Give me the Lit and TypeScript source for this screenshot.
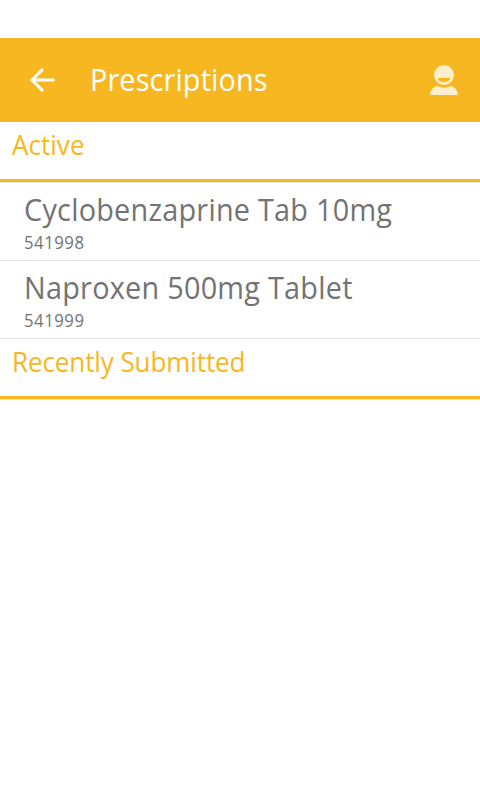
import { LitElement, html, css } from "lit";
import { customElement } from "lit/decorators.js";

interface Prescription { name: string; rx: string; width: number; }
const active: Prescription[] = [
  { name: "Cyclobenzaprine Tab 10mg", rx: "541998", width: 368 },
  { name: "Naproxen 500mg Tablet", rx: "541999", width: 328.5 },
];

// Horizontal condensing of the glyphs; tracking fills the remaining width.
const CONDENSE = 0.93;

@customElement("app-root")
export class AppRoot extends LitElement {
  static styles = css`
    :host { display: flex; flex-direction: column; height: 100vh; overflow: hidden; background: #fff; font-family: "Open Sans", "Noto Sans", sans-serif; }
    .status { height: 38px; flex: none; }
    .bar { height: 84px; flex: none; display: flex; align-items: center; background: #f7b720; color: #fff; padding: 0 20px 0 26px; box-sizing: border-box; }
    .back { width: 32px; height: 32px; margin-right: 32px; flex: none; }
    .title { flex: 1; display: flex; }
    .user { width: 32px; height: 34px; flex: none; }
    .section { flex: none; box-sizing: border-box; border-bottom: 3px solid #f7b720; color: #f7b720; padding: 3px 12px 0; height: 60px; }
    .list { border-top: 1px solid #e2e2e2; flex: none; }
    .row { height: 78px; box-sizing: border-box; border-bottom: 1px solid #e2e2e2; padding: 6px 24px 0; color: #737373; }
    .label { display: block; overflow: visible; }
    .label text { font-family: "Open Sans", "Noto Sans", sans-serif; font-kerning: none; fill: currentColor; }
  `;
  label(text: string, size: number, width: number, height: number, baseline: number) {
    return html`<svg class="label" width=${width} height=${height}><text transform="scale(${CONDENSE} 1)" x="0" y=${baseline} font-size=${size} textLength=${width / CONDENSE} lengthAdjust="spacing">${text}</text></svg>`;
  }
  render() {
    return html`
      <div class="status"></div>
      <header class="bar">
        <svg class="back" viewBox="0 0 32 32" fill="none" stroke="#fff" stroke-width="3"><path d="M28.500 16H6M17 5L6 16L17 27"/></svg>
        <div class="title">${this.label("Prescriptions", 31, 177.5, 42, 32)}</div>
        <svg class="user" viewBox="0 0 32 34" fill="#fdefcd">
          <path fill-rule="evenodd" d="M16 2A10 10 0 1 1 16 22A10 10 0 1 1 16 2ZM9.600 15C10.800 20.700 21.200 20.700 22.400 15Z"/>
          <path d="M2 32C2.500 27.500 5 24 9.300 23C13 25.300 19 25.300 22.700 23C27 24 29.500 27.500 30 32Z"/>
        </svg>
      </header>
      <div class="section">${this.label("Active", 28, 72.5, 38, 30)}</div>
      <div class="list">
        ${active.map((p) => html`<div class="row">${this.label(p.name, 31, p.width, 40, 32)}${this.label(p.rx, 18, 60, 24, 20)}</div>`)}
      </div>
      <div class="section">${this.label("Recently Submitted", 28, 233.5, 38, 30)}</div>
      <div class="list"></div>
    `;
  }
}
